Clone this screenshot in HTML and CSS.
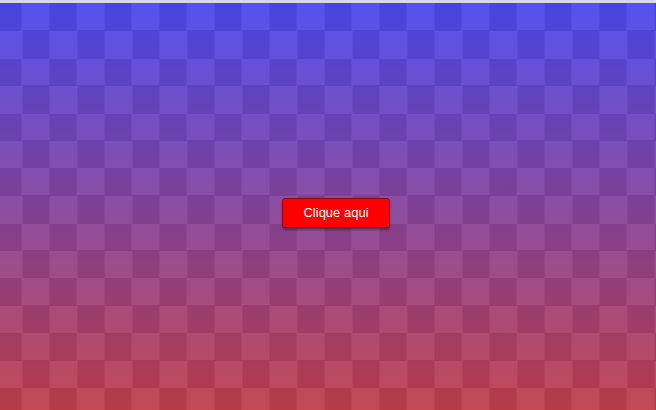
FILE: index.html
```html
<!DOCTYPE html>
<html lang="pt">
<head>
<meta charset="utf-8">
<title>Clique aqui</title>
<link rel="stylesheet" href="styles.css">
</head>
<body>
<div class="topbar"></div>
<main class="page">
  <button class="btn" type="button">Clique aqui</button>
</main>
</body>
</html>
```
FILE: styles.css
```css
html, body {
  margin: 0;
  padding: 0;
  height: 100%;
  overflow: hidden;
}
body {
  background: #dadae6;
  font-family: "Liberation Sans", Arial, sans-serif;
}
.topbar {
  height: 3px;
  background: #d9d9e6;
}
.page {
  box-sizing: border-box;
  height: 407px;
  display: flex;
  align-items: center;
  justify-content: center;
  padding: 12px 0 0 16px;
  background:
    conic-gradient(rgba(255,255,255,0.05) 0 25%, rgba(0,0,0,0.06) 0 50%, rgba(255,255,255,0.05) 0 75%, rgba(0,0,0,0.06) 0) -5.5px 0 / 55px 55px,
    linear-gradient(#4c49ee, #c13f4a);
}
.btn {
  box-sizing: border-box;
  width: 108px;
  height: 30px;
  margin: 0;
  padding: 0;
  background: #ff0000;
  color: #ffffff;
  border: 1px solid #9a0010;
  border-radius: 3px;
  box-shadow: 0 2px 2px rgba(0, 0, 0, 0.35);
  font-family: "Liberation Sans", Arial, sans-serif;
  font-size: 13px;
  cursor: pointer;
}
```
